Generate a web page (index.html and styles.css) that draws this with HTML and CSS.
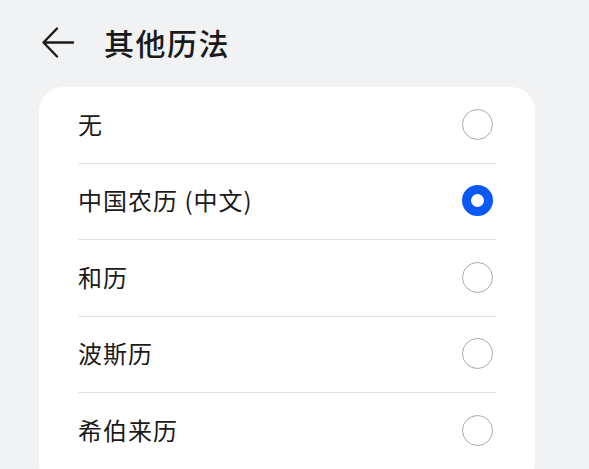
FILE: index.html
```html
<!DOCTYPE html>
<html lang="zh-CN">
<head>
<meta charset="utf-8">
<link rel="stylesheet" href="styles.css">
</head>
<body>
<header class="top">
  <svg class="back" width="34" height="32" viewBox="0 0 34 32"><path d="M32 15.5H3M16 1.5L2.5 15.5L16 29.5" fill="none" stroke="#1a1a1a" stroke-width="2.4" stroke-linecap="round" stroke-linejoin="round"/></svg>
  <h1 class="title">其他历法</h1>
</header>
<main class="card">
  <div class="row"><span class="label">无</span><span class="radio"></span></div>
  <div class="row"><span class="label">中国农历 (中文)</span><span class="radio on"></span></div>
  <div class="row"><span class="label">和历</span><span class="radio"></span></div>
  <div class="row"><span class="label">波斯历</span><span class="radio"></span></div>
  <div class="row"><span class="label">希伯来历</span><span class="radio"></span></div>
</main>
</body>
</html>
```
FILE: styles.css
```css
html, body {
  margin: 0;
  padding: 0;
  background: #f1f2f4;
  font-family: "Noto Sans CJK SC", "Noto Sans", sans-serif;
  color: #1a1a1a;
  overflow: hidden;
}
.top {
  height: 87px;
  display: flex;
  align-items: center;
  padding-left: 41px;
  box-sizing: border-box;
}
.back {
  display: block;
  margin-top: -2px;
}
.title {
  margin: -4px 0 0 29px;
  font-size: 30px;
  font-weight: 500;
  line-height: 1;
  letter-spacing: 1.5px;
}
.card {
  margin: 0 54px 0 39px;
  background: #fff;
  border-radius: 24px;
  padding: 0 39px;
  height: 400px;
}
.row {
  display: flex;
  align-items: center;
  justify-content: space-between;
  border-bottom: 1px solid #e3e3e3;
  box-sizing: border-box;
  height: 76.5px;
}
.label {
  font-size: 24px;
  line-height: 1;
  margin-top: -2px;
  letter-spacing: 1px;
}
.radio {
  width: 31px;
  height: 31px;
  border-radius: 50%;
  border: 1.6px solid #ababab;
  box-sizing: border-box;
  margin-right: 3px;
  margin-top: -1px;
}
.radio.on {
  border: 9px solid #0a59f7;
}
```
